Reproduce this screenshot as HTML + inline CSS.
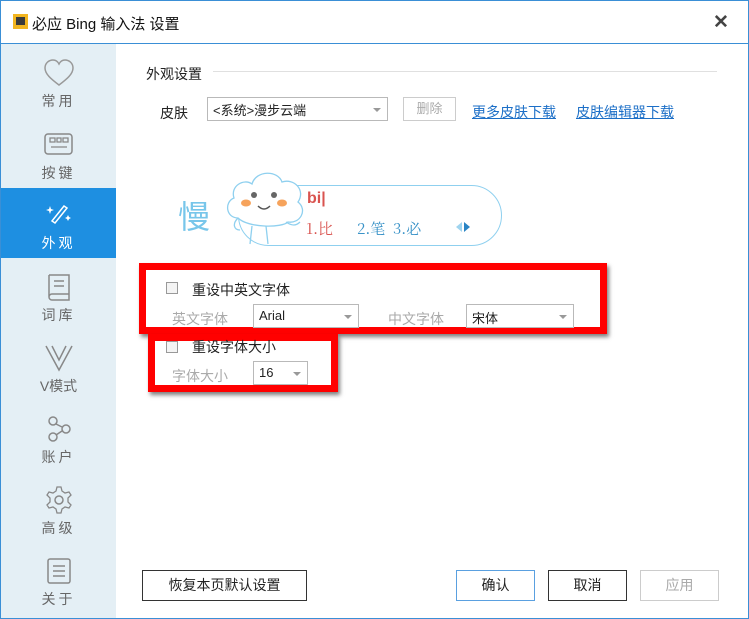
<!DOCTYPE html><html><head><meta charset="utf-8"><style>
*{margin:0;padding:0;box-sizing:border-box}
body{width:749px;height:619px;position:relative;overflow:hidden;background:#fff;font-family:"Liberation Sans","Noto Sans CJK SC",sans-serif;font-size:13px;color:#222}
.a{position:absolute;white-space:nowrap}
.frame{position:absolute;left:0;top:0;width:749px;height:619px;border:1px solid #3a8fd6}
.side{position:absolute;left:1px;top:44px;width:115px;height:574px;background:#e4eff5}
.it{position:absolute;left:1px;width:115px;height:71px;text-align:center;color:#666;font-size:14px;letter-spacing:3px}
.it svg{position:absolute;left:41px;top:10px}
.it span{position:absolute;left:0;width:115px;top:43px}
.sel{position:absolute;border:1px solid #b9b9b9;background:#fff;height:24px;font-size:13px;padding:3px 5px;color:#222}
.sel:after{content:"";position:absolute;right:6px;top:10px;border:4px solid transparent;border-top:4px solid #999}
.btn{position:absolute;height:31px;border:1px solid #333;text-align:center;line-height:29px;font-size:14px;background:#fff}
.red{position:absolute;border:7px solid #f00;box-shadow:2px 3px 4px rgba(0,0,0,.5)}
.cb{position:absolute;width:12px;height:12px;border:1px solid #999;background:#f4f4f4}
.g{color:#aaa}
</style></head><body>
<div class="frame"></div>
<div class="a" style="left:1px;top:43px;width:747px;height:1px;background:#3a8fd6"></div>
<div class="a" style="left:13px;top:14px;width:15px;height:15px;background:#f2b51f"><div style="position:absolute;left:3px;top:3px;width:9px;height:8px;background:#3a3a3a"></div></div>
<div class="a" style="left:32px;top:13px;font-size:15px;color:#111">必应 Bing 输入法 设置</div>
<div class="a" style="left:713px;top:11px;font-size:19px;color:#444;font-weight:bold">✕</div>
<div class="side"></div>
<div class="a" style="left:1px;top:188px;width:115px;height:70px;background:#1e8fe1"></div>
<div class="it" style="top:48px"><svg width="34" height="30" viewBox="0 0 34 30"><path d="M17 27C9 21 3 16 3 10 3 5 7 2 11 2 14 2 16 4 17 6 18 4 20 2 23 2 27 2 31 5 31 10 31 16 25 21 17 27Z" fill="none" stroke="#999" stroke-width="1.5"/></svg><span>常用</span></div>
<div class="it" style="top:120px"><svg width="34" height="30" viewBox="0 0 34 30"><rect x="3" y="4" width="27" height="20" rx="3" fill="none" stroke="#888" stroke-width="1.5"/><path d="M8 8h5v4h-5zM15 8h4v4h-4zM21 8h5v4h-5zM9 17h16" fill="none" stroke="#888" stroke-width="1.3"/></svg><span>按键</span></div>
<div class="it" style="top:190px;color:#fff"><svg width="34" height="30" viewBox="0 0 34 30"><path d="M22 6l-12 15 3 2 12-15z" fill="none" stroke="#fff" stroke-width="1.5"/><path d="M7 9l1-3 1 3 3 1-3 1-1 3-1-3-3-1zM25 17l1-2 1 2 2 1-2 1-1 2-1-2-2-1z" fill="#fff"/></svg><span>外观</span></div>
<div class="it" style="top:262px"><svg width="34" height="30" viewBox="0 0 34 30"><path d="M7 3h20v19H10a3 3 0 0 0 0 6h17V22M7 3v22M12 9h10M12 14h10" fill="none" stroke="#888" stroke-width="1.5"/></svg><span>词库</span></div>
<div class="it" style="top:333px"><svg width="34" height="30" viewBox="0 0 34 30"><path d="M4 3l13 24 13-24M10 3l7 14 7-14" fill="none" stroke="#888" stroke-width="1.5"/></svg><span style="letter-spacing:0">V模式</span></div>
<div class="it" style="top:404px"><svg width="34" height="30" viewBox="0 0 34 30"><circle cx="11" cy="7" r="4" fill="none" stroke="#888" stroke-width="1.5"/><circle cx="24" cy="15" r="4" fill="none" stroke="#888" stroke-width="1.5"/><circle cx="11" cy="23" r="4" fill="none" stroke="#888" stroke-width="1.5"/><path d="M14 10l6 3M14 21l6-4" stroke="#888" stroke-width="1.5"/></svg><span>账户</span></div>
<div class="it" style="top:475px"><svg width="34" height="30" viewBox="0 0 34 30"><circle cx="17" cy="15" r="4" fill="none" stroke="#888" stroke-width="1.5"/><path d="M15 2h4l1 4 3 2 4-1 2 3-3 3v4l3 3-2 3-4-1-3 2-1 4h-4l-1-4-3-2-4 1-2-3 3-3v-4l-3-3 2-3 4 1 3-2z" fill="none" stroke="#888" stroke-width="1.3"/></svg><span>高级</span></div>
<div class="it" style="top:546px"><svg width="34" height="30" viewBox="0 0 34 30"><rect x="6" y="3" width="22" height="24" rx="2" fill="none" stroke="#888" stroke-width="1.5"/><path d="M11 10h12M11 15h12M11 20h12" stroke="#888" stroke-width="1.5"/></svg><span>关于</span></div>

<div class="a" style="left:146px;top:64px;font-size:14px">外观设置</div>
<div class="a" style="left:213px;top:71px;width:504px;height:1px;background:#e0e0e0"></div>
<div class="a" style="left:160px;top:103px;font-size:14px">皮肤</div>
<div class="sel" style="left:207px;top:97px;width:181px;padding-top:2px">&lt;系统&gt;漫步云端</div>
<div class="a" style="left:403px;top:97px;width:53px;height:24px;border:1px solid #ccc;text-align:center;line-height:22px;color:#aaa">删除</div>
<div class="a" style="left:472px;top:102px;font-size:14px;color:#1c6fc7;text-decoration:underline">更多皮肤下载</div>
<div class="a" style="left:576px;top:102px;font-size:14px;color:#1c6fc7;text-decoration:underline">皮肤编辑器下载</div>

<div class="a" style="left:178px;top:192px;font-size:32px;color:#78c6ea">慢</div>
<div class="a" style="left:238px;top:185px;width:264px;height:61px;border:1px solid #8fd0ef;border-radius:31px;background:#fff"></div>
<svg class="a" style="left:218px;top:168px" width="92" height="80" viewBox="0 0 92 80"><path d="M20 50C8 50 6 34 16 30 12 18 26 10 34 16 38 2 60 2 64 14 76 10 88 22 80 34 90 42 82 56 70 54 64 60 30 60 20 50Z" fill="#fff" stroke="#8fd0ef" stroke-width="1.3"/><path d="M20 50c-6 6-4 12 2 12M34 58l-2 18M48 58l2 18M68 54c6 4 10 4 14 0" fill="none" stroke="#8fd0ef" stroke-width="1.3"/><circle cx="36" cy="27" r="3" fill="#666"/><circle cx="56" cy="27" r="3" fill="#666"/><ellipse cx="28" cy="35" rx="5" ry="3.5" fill="#f6a35c"/><ellipse cx="64" cy="35" rx="5" ry="3.5" fill="#f6a35c"/><path d="M40 38q6 6 12 0" fill="none" stroke="#555" stroke-width="1.5"/></svg>
<div class="a" style="left:307px;top:190px;font-size:16px;font-weight:bold;color:#d9534f">bi|</div>
<div class="a" style="left:306px;top:218px;font-size:15px;color:#d9534f;font-family:'Noto Serif CJK SC',serif">1.比</div>
<div class="a" style="left:357px;top:218px;font-size:15px;color:#3a93c8;font-family:'Noto Serif CJK SC',serif">2.笔&nbsp;&nbsp;3.必</div>
<div class="a" style="left:456px;top:222px;border:5px solid transparent;border-right:6px solid #9fd4ef;border-left:0"></div>
<div class="a" style="left:464px;top:222px;border:5px solid transparent;border-left:6px solid #2a84c4;border-right:0"></div>

<div class="red" style="left:139px;top:263px;width:468px;height:71px"></div>
<div class="red" style="left:148px;top:334px;width:190px;height:58px"></div>
<div class="cb" style="left:166px;top:282px"></div>
<div class="a" style="left:192px;top:280px;font-size:14px">重设中英文字体</div>
<div class="a g" style="left:172px;top:309px;font-size:14px">英文字体</div>
<div class="sel" style="left:253px;top:304px;width:106px">Arial</div>
<div class="a g" style="left:388px;top:309px;font-size:14px">中文字体</div>
<div class="sel" style="left:466px;top:304px;width:108px">宋体</div>
<div class="cb" style="left:166px;top:341px"></div>
<div class="a" style="left:192px;top:337px;font-size:14px">重设字体大小</div>
<div class="a g" style="left:172px;top:366px;font-size:14px">字体大小</div>
<div class="sel" style="left:253px;top:361px;width:55px">16</div>

<div class="btn" style="left:142px;top:570px;width:165px">恢复本页默认设置</div>
<div class="btn" style="left:456px;top:570px;width:79px;border-color:#5aa0e0">确认</div>
<div class="btn" style="left:548px;top:570px;width:79px">取消</div>
<div class="btn" style="left:640px;top:570px;width:79px;border-color:#ccc;color:#aaa">应用</div>
</body></html>
